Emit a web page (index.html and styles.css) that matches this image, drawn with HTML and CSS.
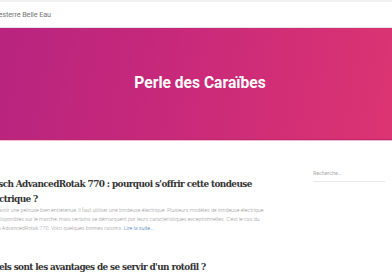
FILE: index.html
```html
<!DOCTYPE html>
<html lang="fr">
<head>
<meta charset="utf-8">
<title>Perle des Caraïbes</title>
<link rel="stylesheet" href="styles.css">
</head>
<body>
<header class="topbar">
  <div class="site-title">Capesterre Belle Eau</div>
</header>
<section class="hero">
  <h1 class="hero-title">Perle des Caraïbes</h1>
</section>
<div class="layout">
  <main class="posts">
    <article class="post">
      <h2 class="post-title">Bosch AdvancedRotak 770 : pourquoi s'offrir cette tondeuse électrique ?</h2>
      <p class="excerpt">Pour avoir une pelouse bien entretenue, il faut utiliser une tondeuse électrique. Plusieurs modèles de tondeuse électrique sont disponibles sur le marché, mais certains se démarquent par leurs caractéristiques exceptionnelles. C'est le cas du Bosch AdvancedRotak 770. Voici quelques bonnes raisons. <a class="more" href="#">Lire la suite...</a></p>
    </article>
    <article class="post">
      <h2 class="post-title">Quels sont les avantages de se servir d'un rotofil ?</h2>
    </article>
  </main>
  <aside class="sidebar">
    <div class="search">Recherche...</div>
  </aside>
</div>
</body>
</html>
```
FILE: styles.css
```css
* { box-sizing: border-box; }
html, body { margin: 0; padding: 0; background: #fff; }
body { font-family: Roboto, "Noto Sans", sans-serif; overflow: hidden; width: 392px; height: 272px; }

.topbar {
  height: 28px;
  border-top: 2px solid #f1f1f1;
  border-bottom: 1px solid #e6e6e6;
  display: flex;
  align-items: center;
  margin-left: -14px;
  padding-bottom: 1px;
}
.site-title {
  font-size: 7.3px;
  color: #777;
  letter-spacing: -0.1px;
}

.hero {
  height: 112px;
  background: linear-gradient(100deg, #b8247f 0%, #c8297a 45%, #dc3472 100%);
  border-bottom: 1px solid #b92a6a;
  box-shadow: 0 1px 0 #f3b6d3;
  display: flex;
  align-items: center;
  justify-content: center;
  padding-left: 8px;
  padding-bottom: 1px;
}
.hero-title {
  margin: 0;
  color: #fff;
  font-weight: 700;
  font-size: 15.6px;
  letter-spacing: 0;
}

.layout {
  display: flex;
  margin-left: -14px;
  padding-top: 36px;
  gap: 43px;
}
.posts { width: 284px; flex: none; }
.post-title {
  margin: 0;
  font-family: "DejaVu Serif Condensed", "DejaVu Serif", serif;
  font-stretch: condensed;
  font-weight: 700;
  font-size: 9.9px;
  line-height: 15px;
  color: #333;
  letter-spacing: -0.6px;
}
.excerpt {
  margin: 0;
  font-size: 5.3px;
  line-height: 9px;
  color: #999;
  font-weight: 300;
}
.more { color: #3b6fb0; text-decoration: none; }
.post + .post { margin-top: 26px; }

.sidebar { width: 72px; flex: none; margin-top: -6px; }
.search {
  font-size: 5.3px;
  color: #aaa;
  padding: 0 0 5px;
  border-bottom: 1px solid #e8e8e8;
}
```
